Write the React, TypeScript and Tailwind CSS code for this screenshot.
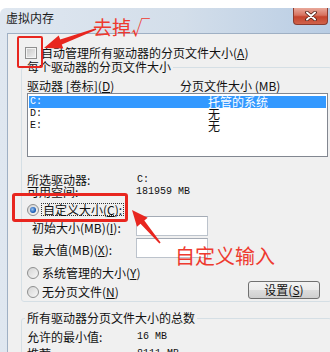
import React from 'react';

const MONO = "font-['Liberation_Mono','Noto_Sans_CJK_SC',monospace] text-[10px]";

function Acc({ k }: { k: string }) {
  return (
    <>
      (<span className="underline underline-offset-1">{k}</span>)
    </>
  );
}

function Radio({ checked = false }: { checked?: boolean }) {
  return (
    <span className="flex h-[12px] w-[12px] shrink-0 items-center justify-center rounded-full border border-[#8e8f8f] bg-[linear-gradient(135deg,#d4d4d4,#f7f7f7)]">
      {checked && (
        <span className="h-[6px] w-[6px] rounded-full bg-[radial-gradient(circle_at_40%_40%,#9cc4f0,#1c5fb8_60%,#0d3f8e)]" />
      )}
    </span>
  );
}

function Input() {
  return (
    <span className="block h-[20px] w-[72px] border border-[#bcc3cc] border-t-[#a4abb5] bg-white" />
  );
}

function CloseButton() {
  return (
    <div className="mr-[2px] flex h-[17px] w-[35px] items-center justify-center rounded-b-[4px] border border-t-0 border-[#8b3b2e] bg-[linear-gradient(to_bottom,#e9a99b_0%,#d7725f_45%,#c5432c_55%,#d0624a_100%)]">
      <svg width="12" height="10" viewBox="0 0 12 10">
        <path d="M2 1.5 L10 8.5 M10 1.5 L2 8.5" stroke="#4a1c14" strokeWidth="3.6" strokeLinecap="round" />
        <path d="M2 1.5 L10 8.5 M10 1.5 L2 8.5" stroke="#ffffff" strokeWidth="2" strokeLinecap="round" />
      </svg>
    </div>
  );
}

export default function App() {
  return (
    <div className="relative h-[352px] w-[330px] overflow-hidden bg-white font-['Noto_Sans_CJK_SC','Noto_Sans',sans-serif] text-[12px] leading-[12px] text-[#111]">
      <div className="mt-[8px] flex h-[344px] w-[330px] flex-col overflow-hidden rounded-tl-[6px] bg-[linear-gradient(to_right,#dfe7f0,#d3deea_55%,#b9cde4)]">
        {/* title bar */}
        <div className="flex h-[25px] shrink-0 items-start justify-between">
          <span className="pl-[6px] pt-[4px] leading-[12px] text-[#1b1b1b]">虚拟内存</span>
          <CloseButton />
        </div>

        {/* dialog body */}
        <div className="ml-[7px] flex-1 border-l border-t border-[#9fb0c4] bg-[#f0f0f0]">
          <div className="mt-[13px] flex h-[12px] items-center gap-[4px] pl-[17px]">
            <span className="flex h-[12px] w-[12px] items-center justify-center border border-[#8e8f8f] bg-[#f4f4f4]">
              <span className="h-[8px] w-[8px] bg-[linear-gradient(135deg,#c9c9c9,#eeeeee)]" />
            </span>
            <span className="whitespace-nowrap">
              自动管理所有驱动器的分页文件大小<Acc k="A" />
            </span>
          </div>

          <fieldset className="ml-[13px] mt-[1px] w-[311px] rounded-[3px] border border-[#d5dfe5] pb-[2px]">
            <legend className="ml-[3px] px-[2px] leading-[14px]">每个驱动器的分页文件大小</legend>

            <div className="mt-[6px] flex h-[12px] pl-[5px]">
              <span className="w-[153px] whitespace-nowrap">
                驱动器 [卷标]<Acc k="D" />
              </span>
              <span className="whitespace-nowrap">分页文件大小 (MB)</span>
            </div>

            <div className="ml-[5px] mt-[1px] h-[64px] w-[301px] border border-[#828790] bg-white pt-[2px]">
              {[
                ['C:', '托管的系统'],
                ['D:', '无'],
                ['E:', '无'],
              ].map(([d, s], i) => (
                <div
                  key={d}
                  className={
                    i === 0
                      ? 'mx-[1px] flex h-[12px] items-center bg-[#3399ff] pl-[1px] text-white'
                      : 'mx-[1px] flex h-[12px] items-center pl-[1px]'
                  }
                >
                  <span className={`w-[178px] ${MONO}`}>{d}</span>
                  <span>{s}</span>
                </div>
              ))}
            </div>

            <div className="mt-[17px] flex h-[12px] items-center pl-[5px]">
              <span className="w-[110px]">所选驱动器:</span>
              <span className={MONO}>C:</span>
            </div>
            <div className="flex h-[12px] items-center pl-[5px]">
              <span className="w-[109px]">可用空间:</span>
              <span className={MONO}>181959 MB</span>
            </div>

            <div className="mt-[5px] flex h-[13px] items-center pl-[5px]">
              <Radio checked />
              <span className="ml-[2px] border border-dotted border-[#333] px-[1px] leading-[11px]">
                自定义大小<Acc k="C" />:
              </span>
            </div>

            <div className="flex items-start pl-[10px]">
              <span className="mt-[6px] w-[104px] whitespace-nowrap">
                初始大小(MB)<Acc k="I" />:
              </span>
              <Input />
            </div>
            <div className="mt-[2px] flex items-start pl-[10px]">
              <span className="mt-[6px] w-[104px] whitespace-nowrap">
                最大值(MB)<Acc k="X" />:
              </span>
              <Input />
            </div>

            <div className="mt-[9px] flex items-start">
              <div className="flex flex-col gap-[7px] pl-[5px]">
                <div className="flex h-[12px] items-center gap-[3px]">
                  <Radio />
                  <span>
                    系统管理的大小<Acc k="Y" />
                  </span>
                </div>
                <div className="flex h-[12px] items-center gap-[3px]">
                  <Radio />
                  <span>
                    无分页文件<Acc k="N" />
                  </span>
                </div>
              </div>
              <button className="ml-auto mr-[11px] mt-[14px] flex h-[18px] w-[72px] items-center justify-center rounded-[3px] border border-[#707070] bg-[linear-gradient(to_bottom,#f3f3f3_0%,#ebebeb_50%,#dddddd_51%,#cfcfcf_100%)] leading-[12px] text-[#111]">
                设置<Acc k="S" />
              </button>
            </div>
          </fieldset>

          <fieldset className="ml-[13px] mt-[9px] w-[311px] rounded-[3px] border border-[#d5dfe5] pb-[20px]">
            <legend className="ml-[3px] px-[2px] leading-[14px]">所有驱动器分页文件大小的总数</legend>
            <div className="mt-[6px] flex h-[12px] items-center pl-[5px]">
              <span className="w-[110px]">允许的最小值:</span>
              <span className={MONO}>16 MB</span>
            </div>
            <div className="mt-[5px] flex h-[12px] items-center pl-[5px]">
              <span className="w-[110px]">推荐:</span>
              <span className={MONO}>8111 MB</span>
            </div>
          </fieldset>
        </div>
      </div>

      {/* red annotations */}
      <div className="pointer-events-none absolute left-[17px] top-[36px] h-[32px] w-[26px] rounded-[2px] border-2 border-[#e8261f]" />
      <div className="pointer-events-none absolute left-[12px] top-[193px] h-[29px] w-[116px] rounded-[3px] border-[3px] border-[#e8261f]" />
      <span className="pointer-events-none absolute left-[93px] top-[16px] whitespace-nowrap text-[19px] leading-[22px] text-[#ee3a2f]">
        去掉√
      </span>
      <span className="pointer-events-none absolute left-[175px] top-[245px] whitespace-nowrap text-[20px] leading-[22px] text-[#ee3a2f]">
        自定义输入
      </span>
      <svg className="pointer-events-none absolute left-0 top-0" width="330" height="352" viewBox="0 0 330 352">
        <polygon
          fill="#e8261f"
          points="44,48 63.3,48.6 61.8,44.4 96.3,29.8 95.7,28.2 60.2,39.6 58.7,35.4"
        />
        <polygon
          fill="#e8261f"
          points="132,210 137,226.7 140.5,223.8 159.4,243.5 160.6,242.5 144.3,220.6 147.7,217.7"
        />
      </svg>
    </div>
  );
}
